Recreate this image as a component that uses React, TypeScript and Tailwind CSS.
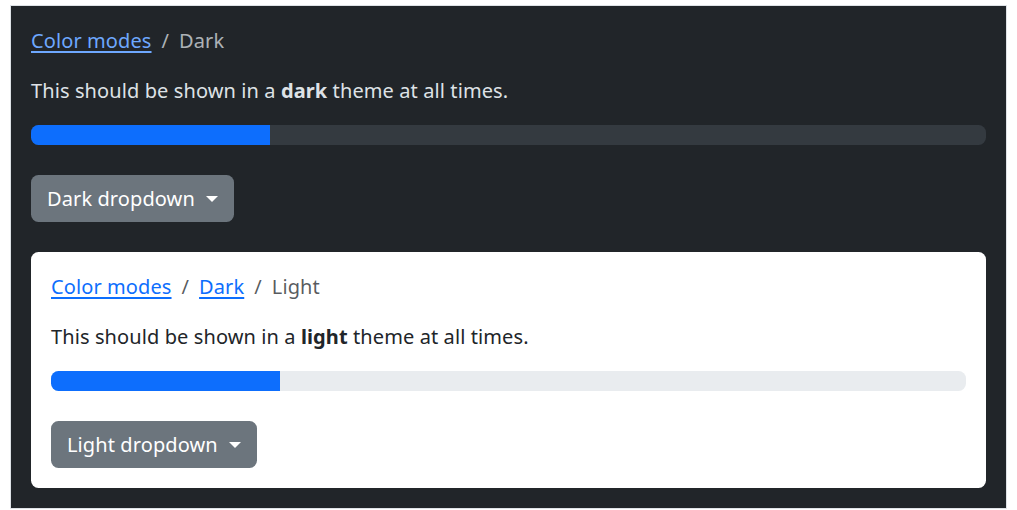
function Caret({ className }: { className?: string }) {
    return (
        <span
            className={`ml-[11px] inline-block h-0 w-0 border-x-[6px] border-t-[6px] border-x-transparent ${className ?? ""}`}
        />
    );
}

function Breadcrumb({
    links,
    active,
    dark,
}: {
    links: string[];
    active: string;
    dark?: boolean;
}) {
    const sep = dark ? "text-[#dee2e6]/75" : "text-[#212529]/75";
    return (
        <nav className="mb-5 flex items-center leading-[30px]">
            {links.map((l) => (
                <span key={l} className="flex">
                    <a
                        href="#"
                        className={`underline underline-offset-[3px] ${dark ? "text-[#6ea8fe]" : "text-[#0d6efd]"}`}
                    >
                        {l}
                    </a>
                    <span className={`px-[10px] ${sep}`}>/</span>
                </span>
            ))}
            <span className={sep}>{active}</span>
        </nav>
    );
}

function Block({ dark }: { dark?: boolean }) {
    return (
        <>
            <Breadcrumb
                dark={dark}
                links={dark ? ["Color modes"] : ["Color modes", "Dark"]}
                active={dark ? "Dark" : "Light"}
            />
            <p className="mb-[19px] leading-[30px]">
                This should be shown in a <strong>{dark ? "dark" : "light"}</strong> theme at all
                times.
            </p>
            {/* progress */}
            <div
                className={`mb-[30px] flex h-5 overflow-hidden rounded-[7.5px] ${dark ? "bg-[#343a40]" : "bg-[#e9ecef]"}`}
            >
                <div className="w-1/4 bg-[#0d6efd]" />
            </div>
            <button className="flex h-[47px] items-center rounded-[7.5px] bg-[#6c757d] px-[16px] leading-[30px] tracking-[0.1px] text-white">
                {dark ? "Dark dropdown" : "Light dropdown"}
                <Caret className="border-t-white" />
            </button>
        </>
    );
}

export default function App() {
    return (
        <div className="bg-white px-[10px] pt-[5px] font-['Noto_Sans',sans-serif] text-[20px] tracking-[0.1px]">
            <div className="border border-[#dee2e6]">
                <div className="bg-[#212529] p-5 text-[#dee2e6]">
                    <Block dark />
                    <div className="mt-[30px] rounded-[7.5px] bg-white p-5 text-[#212529]">
                        <Block />
                    </div>
                </div>
            </div>
        </div>
    );
}
